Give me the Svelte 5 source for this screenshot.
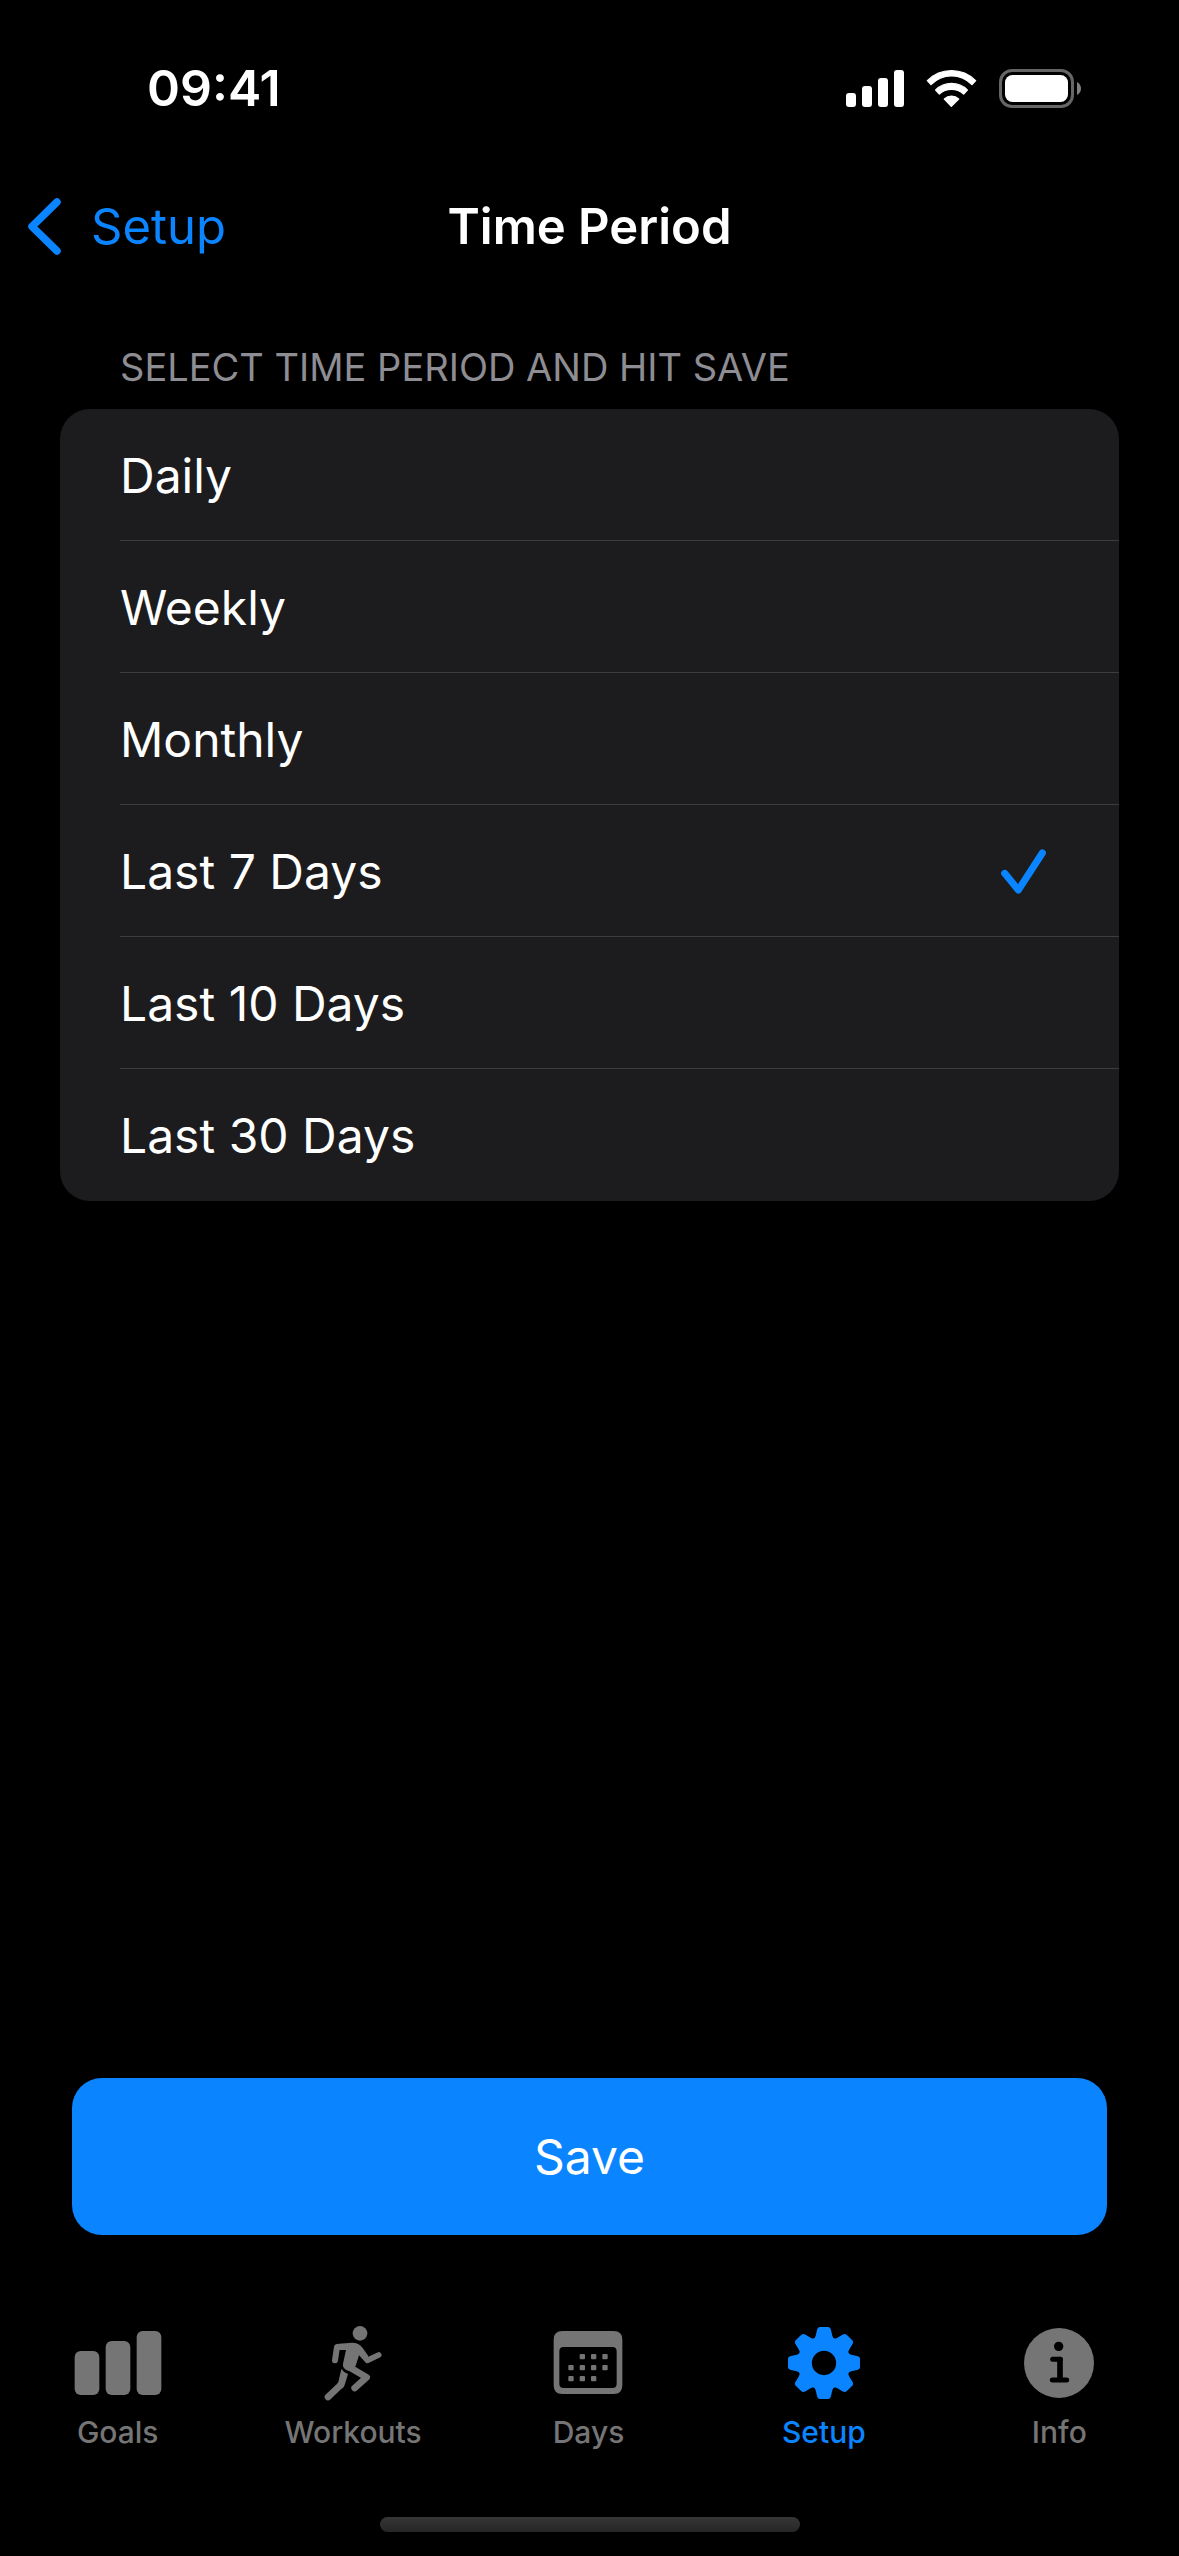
<script>
  const periods = ['Daily', 'Weekly', 'Monthly', 'Last 7 Days', 'Last 10 Days', 'Last 30 Days'];
  const tabs = ['Goals', 'Workouts', 'Days', 'Setup', 'Info'];
  const teeth = [0, 45, 90, 135, 180, 225, 270, 315];
  const dots = [
    [183, 192], [217, 192], [251, 192],
    [149, 225], [183, 225], [217, 225], [251, 225],
    [149, 258], [183, 258], [217, 258]
  ];

  let selected = $state('Last 7 Days');
  let activeTab = $state('Setup');
</script>

<div class="screen">
  <header class="status">
    <time>09:41</time>
    <div class="indicators">
      <svg width="58" height="39" viewBox="0 0 58 39" aria-hidden="true">
        <rect x="0" y="24" width="10" height="14" rx="3" />
        <rect x="16" y="17" width="10" height="21" rx="3" />
        <rect x="32" y="9" width="10" height="29" rx="3" />
        <rect x="48" y="1" width="10" height="37" rx="3" />
      </svg>
      <svg width="51" height="39" viewBox="378 84 153 117" aria-hidden="true">
        <g stroke="#fff" stroke-width="4" stroke-linejoin="round">
          <path d="M382 119 A102 102 0 0 1 527 119 L516 131 A84 84 0 0 0 393 131 Z" />
          <path d="M407 147 A67 67 0 0 1 502 147 L491 159 A55 55 0 0 0 418 159 Z" />
          <path d="M433 174 A31 31 0 0 1 476 174 L454 196 Z" />
        </g>
      </svg>
      <svg width="82" height="39" viewBox="0 0 82 39" aria-hidden="true">
        <rect x="1.5" y="1.5" width="72" height="36" rx="11.5" fill="none" stroke="#666" stroke-width="3" />
        <rect x="6" y="6" width="63" height="27" rx="7.5" />
        <path d="M78 13 Q82 15.500 82 19.500 Q82 23.500 78 26 Z" fill="#808080" />
      </svg>
    </div>
  </header>

  <nav class="navbar">
    <a class="back" href="#setup">
      <svg width="33" height="57" viewBox="0 0 33 57" aria-hidden="true">
        <path d="M29 4 L4 28.500 L29 53" fill="none" stroke="currentColor" stroke-width="7.500" stroke-linecap="round" stroke-linejoin="round" />
      </svg>
      <span>Setup</span>
    </a>
    <h1>Time Period</h1>
  </nav>

  <main>
    <h2 id="period-heading">SELECT TIME PERIOD AND HIT SAVE</h2>
    <div class="card" role="radiogroup" aria-labelledby="period-heading">
      {#each periods as period}
        <label class="row">
          <input type="radio" name="period" value={period} bind:group={selected} />
          <span class="cell">
            <span>{period}</span>
            {#if selected === period}
              <svg width="45" height="45" viewBox="183 206 135 135" aria-hidden="true">
                <path d="M194 279 L235 329 L307 218" fill="none" stroke="currentColor" stroke-width="21" stroke-linecap="round" stroke-linejoin="round" />
              </svg>
            {/if}
          </span>
        </label>
      {/each}
    </div>
  </main>

  <button class="save" type="button">Save</button>

  <nav class="tabs">
    {#each tabs as tab}
      <button type="button" class="tab" class:active={activeTab === tab} onclick={() => (activeTab = tab)}>
        {#if tab === 'Goals'}
          <svg width="96" height="84" viewBox="88 90 288 252" aria-hidden="true">
            <rect x="102" y="183" width="74" height="132" rx="18" />
            <rect x="195" y="153" width="74" height="162" rx="18" />
            <rect x="288" y="123" width="74" height="192" rx="18" />
          </svg>
        {:else if tab === 'Workouts'}
          <svg width="96" height="84" viewBox="795 90 288 252" aria-hidden="true">
            <circle cx="960" cy="130" r="22" />
            <path d="M890 162 L936 158 Q957 158 968 174 L985 198 L976 216 L957 196 L947 228 L926 243 Q906 236 909 221 L918 180 L892 180 Z" />
            <path d="M904 237 Q912 248 924 252 L914 285 Q912 291 906 296 L892 281 Q895 277 896 272 Z" />
            <g fill="none" stroke="currentColor" stroke-linecap="round" stroke-linejoin="round">
              <path d="M920 170 L891 171 L885 211" stroke-width="18" />
              <path d="M955 175 L982 211 L1016 195" stroke-width="17" />
              <path d="M924 229 L980 262 L944 294" stroke-width="20" />
              <path d="M900 287 L864 321" stroke-width="20" />
            </g>
          </svg>
        {:else if tab === 'Days'}
          <svg width="96" height="84" viewBox="64 90 288 252" aria-hidden="true">
            <path fill-rule="evenodd" d="M131 123 H285 Q311 123 311 149 V286 Q311 312 285 312 H131 Q105 312 105 286 V149 Q105 123 131 123 Z M135 171 Q122 171 122 184 V281 Q122 294 135 294 H281 Q294 294 294 281 V184 Q294 171 281 171 Z" />
            {#each dots as [x, y]}
              <rect {x} {y} width="16" height="16" rx="3" />
            {/each}
          </svg>
        {:else if tab === 'Setup'}
          <svg width="96" height="84" viewBox="-144 -129 288 252" aria-hidden="true">
            <circle r="58" fill="none" stroke="currentColor" stroke-width="43" />
            {#each teeth as angle}
              <path transform="rotate({angle})" d="M-33 -70 Q-27 -74 -25 -82 L-21 -99 Q-19 -108 -12 -108 H12 Q19 -108 21 -99 L25 -82 Q27 -74 33 -70 Z" />
            {/each}
          </svg>
        {:else}
          <svg width="96" height="84" viewBox="156 90 288 252" aria-hidden="true">
            <circle cx="300" cy="219" r="105" />
            <circle cx="299" cy="169" r="14" fill="#000" />
            <g fill="none" stroke="#000" stroke-linecap="round" stroke-linejoin="round">
              <path d="M281 208 H304" stroke-width="15" />
              <path d="M303 209 V268" stroke-width="17" />
              <path d="M280 270 H323" stroke-width="15" />
            </g>
          </svg>
        {/if}
        <span>{tab}</span>
      </button>
    {/each}
  </nav>

  <div class="home"></div>
</div>

<style>
  :global(body) {
    margin: 0;
    background: #000;
  }

  .screen {
    box-sizing: border-box;
    min-height: 100vh;
    display: flex;
    flex-direction: column;
    padding-bottom: 24px;
    background: #000;
    color: #fff;
    font-family: Inter, 'Liberation Sans', sans-serif;
    font-size: 49px;
    line-height: 60px;
  }

  svg {
    display: block;
    flex: none;
    fill: currentColor;
  }

  button {
    border: 0;
    padding: 0;
    background: none;
    color: inherit;
    font: inherit;
  }

  .status {
    display: flex;
    align-items: center;
    justify-content: space-between;
    height: 176px;
    padding: 0 98px 0 147px;
  }

  time {
    font-size: 50px;
    font-weight: 600;
  }

  .indicators {
    display: flex;
    gap: 22px;
  }

  .navbar {
    display: grid;
    grid-template-columns: 1fr auto 1fr;
    align-items: center;
    height: 101px;
    padding: 0 28px;
  }

  .back {
    display: flex;
    align-items: center;
    gap: 30px;
    color: #0b84ff;
    text-decoration: none;
  }

  h1,
  h2 {
    margin: 0;
    font-size: inherit;
  }

  h1 {
    font-weight: 600;
  }

  main {
    flex: 1;
    padding: 67px 60px;
  }

  h2 {
    padding: 0 60px 19px;
    color: #8d8d93;
    font-size: 38px;
    font-weight: 400;
    line-height: 46px;
  }

  .card {
    overflow: hidden;
    border-radius: 30px;
    background: #1c1c1e;
  }

  .row {
    display: flex;
    padding-left: 60px;
    font-size: 48px;
  }

  .row input {
    appearance: none;
    width: 0;
    height: 0;
    margin: 0;
  }

  .cell {
    flex: 1;
    display: flex;
    align-items: center;
    justify-content: space-between;
    box-sizing: border-box;
    height: 132px;
    padding: 2px 73px 0 0;
    border-bottom: 1px solid #3d3d41;
  }

  .row:last-child .cell {
    border-bottom-color: transparent;
  }

  .cell svg {
    color: #0b84ff;
  }

  .save {
    height: 157px;
    margin: 0 72px;
    border-radius: 30px;
    background: #0b84ff;
    font-size: 48px;
  }

  .tabs {
    display: grid;
    grid-template-columns: repeat(5, 1fr);
    padding: 85px 2px 67px 0;
  }

  .tab {
    display: flex;
    flex-direction: column;
    align-items: center;
    gap: 10px;
    color: #757575;
    font-size: 30px;
    font-weight: 500;
    line-height: 36px;
  }

  .tab.active {
    color: #0b84ff;
  }

  .home {
    align-self: center;
    width: 420px;
    height: 15px;
    border-radius: 8px;
    background: linear-gradient(#363636, #262626);
  }
</style>
